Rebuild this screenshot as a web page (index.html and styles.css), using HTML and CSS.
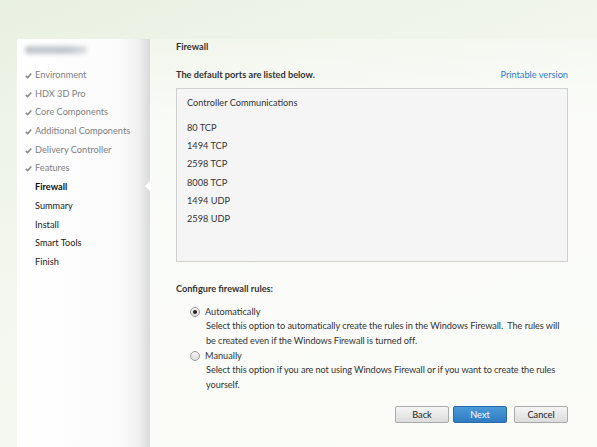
FILE: index.html
```html
<!DOCTYPE html>
<html>
<head>
<meta charset="utf-8">
<link rel="stylesheet" href="styles.css">
</head>
<body>
<div class="app">
  <aside class="sidebar">
    <div class="logo"></div>
    <ul class="steps">
      <li class="done"><svg class="chk" viewBox="0 0 10 10"><path d="M1 5.5 L3.8 8 L9 2" fill="none" stroke="#8a8a8a" stroke-width="2.2"/></svg>Environment</li>
      <li class="done"><svg class="chk" viewBox="0 0 10 10"><path d="M1 5.5 L3.8 8 L9 2" fill="none" stroke="#8a8a8a" stroke-width="2.2"/></svg>HDX 3D Pro</li>
      <li class="done"><svg class="chk" viewBox="0 0 10 10"><path d="M1 5.5 L3.8 8 L9 2" fill="none" stroke="#8a8a8a" stroke-width="2.2"/></svg>Core Components</li>
      <li class="done"><svg class="chk" viewBox="0 0 10 10"><path d="M1 5.5 L3.8 8 L9 2" fill="none" stroke="#8a8a8a" stroke-width="2.2"/></svg>Additional Components</li>
      <li class="done"><svg class="chk" viewBox="0 0 10 10"><path d="M1 5.5 L3.8 8 L9 2" fill="none" stroke="#8a8a8a" stroke-width="2.2"/></svg>Delivery Controller</li>
      <li class="done"><svg class="chk" viewBox="0 0 10 10"><path d="M1 5.5 L3.8 8 L9 2" fill="none" stroke="#8a8a8a" stroke-width="2.2"/></svg>Features</li>
      <li class="current">Firewall</li>
      <li class="todo">Summary</li>
      <li class="todo">Install</li>
      <li class="todo">Smart Tools</li>
      <li class="todo">Finish</li>
    </ul>
  </aside>
  <main class="main">
    <span class="notch"></span>
    <h1 class="title">Firewall</h1>
    <div class="ports-head">
      <span class="bold">The default ports are listed below.</span>
      <a class="link">Printable version</a>
    </div>
    <div class="ports-box">
      <div class="group">Controller Communications</div>
      <div class="port">80 TCP</div>
      <div class="port">1494 TCP</div>
      <div class="port">2598 TCP</div>
      <div class="port">8008 TCP</div>
      <div class="port">1494 UDP</div>
      <div class="port">2598 UDP</div>
    </div>
    <div class="cfg bold">Configure firewall rules:</div>
    <div class="option first">
      <div class="opt-label"><span class="radio checked"></span>Automatically</div>
      <div class="opt-desc">Select this option to automatically create the rules in the Windows Firewall.&nbsp; The rules will be created even if the Windows Firewall is turned off.</div>
    </div>
    <div class="option">
      <div class="opt-label"><span class="radio"></span>Manually</div>
      <div class="opt-desc">Select this option if you are not using Windows Firewall or if you want to create the rules yourself.</div>
    </div>
    <div class="buttons">
      <button class="btn">Back</button>
      <button class="btn primary">Next</button>
      <button class="btn cancel">Cancel</button>
    </div>
  </main>
</div>
</body>
</html>
```
FILE: styles.css
```css
* { box-sizing: border-box; }
html, body { margin: 0; padding: 0; }
body {
  width: 597px;
  height: 447px;
  overflow: hidden;
  font-family: Lato, "Noto Sans", sans-serif;
  font-size: 9.2px;
  color: #333;
  background: linear-gradient(160deg, #e9f1e2 0%, #f4f7ef 45%, #f6f9f0 100%);
}
.app {
  display: flex;
  height: 447px;
  padding-top: 39px;
  padding-left: 17px;
}
.sidebar {
  width: 133px;
  background: linear-gradient(90deg, #ffffff 0%, #fbfbfb 78%, #efefef 92%, #d9d9d9 100%);
  padding: 6px 0 0 0;
}
.logo {
  width: 62px;
  height: 8px;
  margin-left: 8px;
  margin-top: 1px;
  background: linear-gradient(90deg, #c3c7cc 0%, #c3c7cc 70%, #dde0e3 100%);
  filter: blur(2px);
  border-radius: 3px;
}
.steps {
  list-style: none;
  margin: 12px 0 0 0;
  padding: 0;
}
.steps li {
  height: 18.7px;
  line-height: 18.7px;
  padding-left: 18px;
  white-space: nowrap;
  display: flex;
  align-items: center;
}
.steps li.done { color: #808080; padding-left: 8px; }
.steps li.current { font-weight: bold; color: #111; }
.steps li.todo { color: #222; }
.chk { width: 7px; height: 7px; margin-right: 3px; flex: none; }
.main {
  flex: 1;
  position: relative;
  padding: 0 29px 0 26px;
  background: linear-gradient(180deg, rgba(255,255,255,0.25) 0%, rgba(255,255,255,0.6) 20%, rgba(255,255,255,0.55) 100%);
}
.notch {
  position: absolute;
  left: -5px;
  top: 141px;
  width: 0;
  height: 0;
  border-top: 6px solid transparent;
  border-bottom: 6px solid transparent;
  border-right: 6px solid #ffffff;
}
.title {
  margin: 0;
  font-size: 9.2px;
  font-weight: bold;
  line-height: 16px;
  color: #333;
}
.bold { font-weight: bold; }
.ports-head {
  display: flex;
  justify-content: space-between;
  margin-top: 12px;
  line-height: 16px;
}
.link { color: #2f7ad0; }
.ports-box {
  margin-top: 5px;
  height: 174px;
  border: 1px solid #cfcfcf;
  background: #f5f5f5;
  padding: 6px 10px;
}
.group { line-height: 16px; margin-bottom: 8px; }
.port { line-height: 18.2px; }
.cfg { margin-top: 19px; line-height: 16px; }
.option { padding-left: 30px; }
.option.first { margin-top: 7px; }
.opt-label {
  display: flex;
  align-items: center;
  line-height: 15px;
  margin-left: -16px;
}
.radio {
  width: 10px;
  height: 10px;
  border: 1px solid #999;
  border-radius: 50%;
  background: linear-gradient(#f4f4f4, #dedede);
  margin-right: 5px;
  display: inline-flex;
  align-items: center;
  justify-content: center;
  flex: none;
}
.radio.checked::after {
  content: "";
  width: 4px;
  height: 4px;
  border-radius: 50%;
  background: #222;
}
.opt-desc { line-height: 14.7px; letter-spacing: -0.08px; }
.buttons {
  display: flex;
  justify-content: flex-end;
  margin-top: 13px;
}
.btn {
  width: 54px;
  height: 17px;
  font-family: inherit;
  font-size: 9.2px;
  color: #222;
  border: 1px solid #aaa;
  border-radius: 2px;
  background: linear-gradient(#f5f5f5, #dcdcdc);
  padding: 0;
  margin-left: 4px;
}
.btn.cancel { margin-left: 7px; }
.btn.primary {
  color: #fff;
  border-color: #2a6aa8;
  background: linear-gradient(#4a9bd9, #2f7bc2);
}
```
